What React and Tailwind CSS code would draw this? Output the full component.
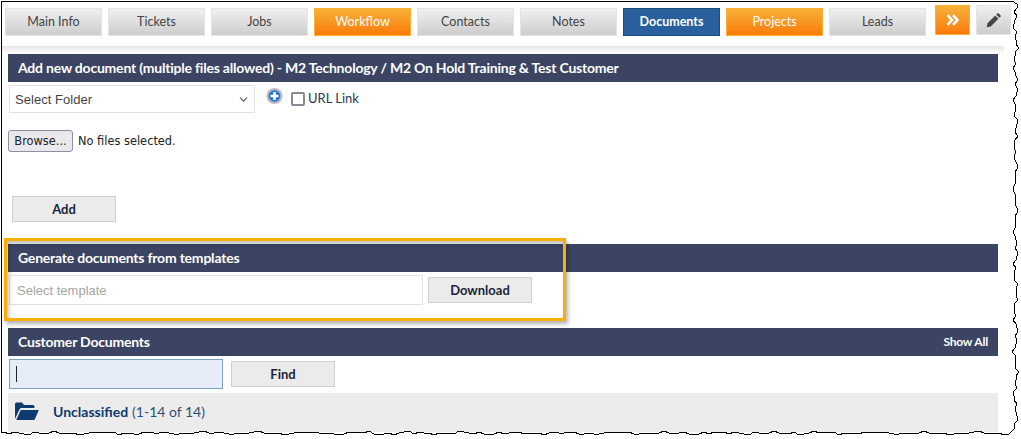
import { ChevronDown } from 'lucide-react';

const tabs = [
  { label: 'Main Info' },
  { label: 'Tickets' },
  { label: 'Jobs' },
  { label: 'Workflow', kind: 'orange' },
  { label: 'Contacts' },
  { label: 'Notes' },
  { label: 'Documents', kind: 'blue' },
  { label: 'Projects', kind: 'orange' },
  { label: 'Leads' },
];

const tabStyles = {
  gray: 'border-[#e4e4e4] bg-gradient-to-b from-[#f0f0f0] to-[#cdcdcd] text-[#444] font-normal',
  orange: 'border-[#fbb034] bg-gradient-to-b from-[#f5b035] to-[#fb7a02] text-white font-normal',
  blue: 'border-[#1d4a7d] bg-[#2a5f9e] text-white font-bold',
};

// jagged screenshot edge, computed from fixed waves so the picture is stable
const wobble = (i) => Math.sin(i * 1.7) + Math.sin(i * 0.61 + 1) + Math.sin(i * 3.1 + 2) * 0.7;

const tearPoints = [[1, 1], [1012, 1]];
for (let i = 1; i * 4 < 430; i++) {
  tearPoints.push([Math.round(1015.5 + wobble(i) * 1.3), i * 4]);
}
for (let i = 1; i * 5 < 1012; i++) {
  tearPoints.push([1014 - i * 5, Math.round(433 + wobble(i + 40) * 0.8)]);
}
tearPoints.push([1, 433]);
const tearLine = tearPoints.map((p) => p.join(',')).join(' ');
const tearPath = `M${tearPoints.map((p) => p.join(' ')).join(' L')} Z M0 0 H1021 V439 H0 Z`;

function SectionBar({ title, children }) {
  return (
    <div className="ml-2 mr-[23px] flex h-7 items-center justify-between bg-[#3b4463] px-2.5 font-['Lato',sans-serif] text-sm font-bold tracking-[-0.21px] text-white">
      <span>{title}</span>
      {children}
    </div>
  );
}

function GrayButton({ children, className }) {
  return (
    <button className={`h-[26px] w-[104px] border border-[#d0d0d0] bg-[#ebebeb] pt-px font-['Lato',sans-serif] text-[13px] font-bold text-[#1a2438] ${className}`}>
      {children}
    </button>
  );
}

export default function App() {
  return (
    <div className="relative h-[439px] w-[1021px] overflow-hidden bg-white">
      {/* Tabs */}
      <div className="flex h-[46px] items-start pl-[5px] pt-[5px] font-['Lato',sans-serif] text-[12.5px]">
        <div className="mt-[3px] flex gap-[6px]">
          {tabs.map((t) => (
            <div
              key={t.label}
              className={`flex h-[28px] w-[97px] items-center justify-center border ${tabStyles[t.kind || 'gray']}`}
            >
              {t.label}
            </div>
          ))}
        </div>
        <div className="ml-[9px] flex h-[30px] w-[35px] items-center justify-center border border-[#fbb034] bg-gradient-to-b from-[#f5b035] to-[#fb7a02]">
          <svg width="13" height="12" viewBox="0 0 13 12" fill="none" stroke="white" strokeWidth="2.6">
            <path d="M1.5 1.2 6 6 1.5 10.8M7 1.2 11.5 6 7 10.8" />
          </svg>
        </div>
        <div className="ml-[6px] flex h-[30px] w-[35px] items-center justify-center border border-[#e4e4e4] bg-gradient-to-b from-[#f0f0f0] to-[#cdcdcd]">
          <svg width="15" height="15" viewBox="0 0 14 14" fill="#444">
            <path d="M.6 13.4 1.4 9.6 8.6 2.4 11.6 5.4 4.4 12.6ZM9.5 1.5 10.5.5a1 1 0 0 1 1.4 0L13.5 2.100a1 1 0 0 1 0 1.400L12.500 4.500Z" />
          </svg>
        </div>
      </div>

      <div className="mr-[17px] h-2 bg-gradient-to-b from-[#e6e6e6] to-white" />

      {/* Add new document */}
      <SectionBar title="Add new document (multiple files allowed) - M2 Technology / M2 On Hold Training & Test Customer" />
      <div className="ml-[9px] mt-[3px] flex items-center text-[#444]">
        <div className="flex h-7 w-[246px] items-center justify-between border border-[#e2e2e2] pl-[5px] pr-[4px] pt-px font-['Liberation_Sans',sans-serif] text-[13px] tracking-[0.05px]">
          <span>Select Folder</span>
          <ChevronDown size={13} strokeWidth={2} className="text-[#555]" />
        </div>
        <svg className="mb-[6px] ml-[11px]" width="17" height="16" viewBox="0 0 16 16">
          <circle cx="8" cy="8" r="8" fill="#b9bdc3" />
          <circle cx="8" cy="8" r="5.800" fill="#2577d4" />
          <path d="M8 4v8M4 8h8" stroke="white" strokeWidth="2.600" />
        </svg>
        <span className="ml-[8px] h-[14px] w-[14px] rounded-[2px] border-2 border-[#8a8a96] bg-white" />
        <span className="ml-[3px] font-['Lato',sans-serif] text-[13px] text-[#2e3a4c]">URL Link</span>
      </div>
      <div className="ml-2 mt-[17px] flex items-center font-['DejaVu_Sans',sans-serif] text-[11.4px] text-[#222]">
        <button className="h-[22px] w-[65px] rounded-[3px] border border-[#8f8f9d] bg-[#e9e9ed] pt-px">Browse...</button>
        <span className="ml-[5px] pt-[2px]">No files selected.</span>
      </div>
      <GrayButton className="ml-3 mt-[44px] block">Add</GrayButton>

      {/* Templates */}
      <div className="mt-[22px]">
        <SectionBar title="Generate documents from templates" />
      </div>
      <div className="ml-[9px] mt-[3px] flex items-center">
        <div className="flex h-[30px] w-[414px] items-center border border-[#e2e2e2] pl-[7px] pt-[1px] font-['Liberation_Sans',sans-serif] text-[13px] text-[#a5a5a5]">
          Select template
        </div>
        <GrayButton className="ml-[5px]">Download</GrayButton>
      </div>

      {/* Customer documents */}
      <div className="mt-[23px]">
        <SectionBar title="Customer Documents">
          <span className="text-xs">Show All</span>
        </SectionBar>
      </div>
      <div className="ml-[9px] mt-[3px] flex items-center">
        <div className="flex h-[30px] w-[214px] items-center border border-[#7a9fbd] bg-[#e6edf6] pl-[6px]">
          <span className="h-[16px] w-px bg-[#222]" />
        </div>
        <GrayButton className="ml-2">Find</GrayButton>
      </div>
      <div className="ml-2 mr-[23px] mt-1 flex h-[39px] items-center bg-[#ececec] pb-[2px] pl-[6px] font-['Lato',sans-serif] text-sm text-[#2c4f7a]">
        <svg className="mb-[1px]" width="26" height="20" viewBox="0 0 26 20" fill="#0f3a6e">
          <path d="M1 18V3a1.500 1.500 0 0 1 1.500-1.500H8L10 4h9a1.500 1.500 0 0 1 1.500 1.500V7H7.500a2 2 0 0 0-1.900 1.300Z" />
          <path d="M6.800 9h18L21 18a1.500 1.500 0 0 1-1.400 1H2.200Z" />
        </svg>
        <span className="ml-[13px] font-bold text-[#0f3a6e]">Unclassified</span>
        <span className="ml-1">(1-14 of 14)</span>
      </div>

      {/* Callout over the templates section */}
      <div className="absolute left-[4px] top-[238px] h-[83px] w-[562px] border-[3px] border-[#f7ae07] shadow-[2px_3px_4px_rgba(0,0,0,0.3),inset_2px_3px_4px_rgba(0,0,0,0.25)]" />

      {/* Torn screenshot edge */}
      <svg className="pointer-events-none absolute left-0 top-0" width="1021" height="439" shapeRendering="crispEdges">
        <path d={tearPath} fill="white" fillRule="evenodd" />
        <polygon points={tearLine} fill="none" stroke="#000" strokeWidth="1" />
      </svg>
    </div>
  );
}
